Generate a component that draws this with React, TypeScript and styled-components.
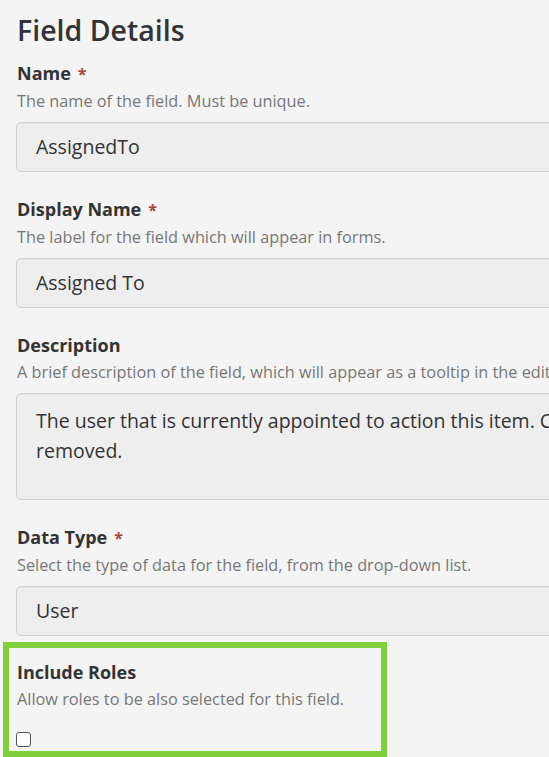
import React from 'react';
import styled, { createGlobalStyle } from 'styled-components';

const GlobalStyle = createGlobalStyle`
  html, body {
    margin: 0;
    padding: 0;
    background: #f4f4f4;
    overflow: hidden;
  }
  body {
    font-family: "Open Sans", "Noto Sans", "Liberation Sans", sans-serif;
    color: #333;
  }
`;

const Page = styled.div`
  width: 660px;
  padding: 10px 0 0 16px;
  box-sizing: border-box;
`;

const Heading = styled.h1`
  margin: 0 0 0 1px;
  font-size: 28.5px;
  font-weight: 600;
  line-height: 40px;
  color: #333;
`;

const Group = styled.div<{ highlight?: boolean; first?: boolean }>`
  display: flex;
  flex-direction: column;
  margin-top: ${p => (p.first ? '11px' : p.highlight ? '6px' : '25px')};
  ${p =>
    p.highlight &&
    `
    width: 384px;
    box-sizing: border-box;
    margin-left: -13px;
    padding: 12px 0 4px 7px;
    border: 6px solid #80d03c;
  `}
`;

const Label = styled.label`
  font-size: 18px;
  font-weight: 700;
  line-height: 24px;
  color: #333;
  padding-left: 1px;
`;

const Required = styled.span`
  color: #a94442;
  margin-left: 7px;
  font-size: 16px;
`;

const Help = styled.div`
  font-size: 16.3px;
  line-height: 22px;
  color: #777;
  margin-top: 4px;
  padding-left: 1px;
  white-space: nowrap;
`;

const Input = styled.div<{ tall?: boolean }>`
  margin-top: 10px;
  height: ${p => (p.tall ? '93px' : '48px')};
  box-sizing: content-box;
  border: 1px solid #cfcfcf;
  border-radius: 5px;
  background: #eeeeee;
  padding: ${p => (p.tall ? '12px 19px 0' : '0 19px')};
  display: flex;
  align-items: ${p => (p.tall ? 'flex-start' : 'center')};
  font-size: 19.5px;
  line-height: 30px;
  color: #333;
  white-space: ${p => (p.tall ? 'pre' : 'nowrap')};
  overflow: hidden;
  box-shadow: inset 0 1px 1px rgba(0, 0, 0, 0.04);
`;

const Check = styled.span`
  margin-top: 22px;
  width: 13px;
  height: 13px;
  border: 1.5px solid #555;
  border-radius: 3px;
  background: #fff;
`;

interface IFieldProps {
  label: string;
  help: string;
  required?: boolean;
  first?: boolean;
}

const Field: React.FC<React.PropsWithChildren<IFieldProps>> = ({ label, help, required, first, children }) => (
  <Group first={first}>
    <Label>
      {label}
      {required && <Required>*</Required>}
    </Label>
    <Help>{help}</Help>
    {children}
  </Group>
);

export default function App() {
  return (
    <>
      <GlobalStyle />
      <Page>
        <Heading>Field Details</Heading>
        <Field first label="Name" help="The name of the field. Must be unique." required>
          <Input>AssignedTo</Input>
        </Field>
        <Field label="Display Name" help="The label for the field which will appear in forms." required>
          <Input>Assigned To</Input>
        </Field>
        <Field
          label="Description"
          help="A brief description of the field, which will appear as a tooltip in the editor."
        >
          <Input tall>
            {'The user that is currently appointed to action this item. Cleared once\nremoved.'}
          </Input>
        </Field>
        <Field label="Data Type" help="Select the type of data for the field, from the drop-down list." required>
          <Input>User</Input>
        </Field>
        <Group highlight>
          <Label>Include Roles</Label>
          <Help>Allow roles to be also selected for this field.</Help>
          <Check />
        </Group>
      </Page>
    </>
  );
}
